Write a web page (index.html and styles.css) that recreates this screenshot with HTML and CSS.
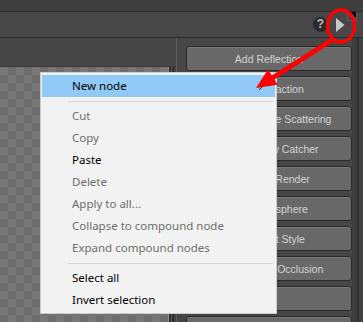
FILE: index.html
```html
<!DOCTYPE html>
<html lang="en">
<head>
    <meta charset="UTF-8">
    <title>Node Editor</title>
    <link rel="stylesheet" href="styles.css">
</head>
<body>
    <div class="topbar"></div>

    <div class="toolbar">
        <span class="help">?</span>
        <svg class="play" width="9" height="14" viewBox="0 0 9 14"><polygon points="0,0 8.5,7 0,14" fill="#c9c9c9"/></svg>
        <span class="corner"></span>
    </div>

    <div class="main">
        <div class="viewport">
            <div class="viewport-head"></div>
            <div class="viewport-body">
                <div class="checker"></div>
                <div class="scroll"></div>
            </div>
        </div>

        <div class="side">
            <button class="btn">Add Reflection</button>
            <button class="btn">Add Refraction</button>
            <button class="btn">Add Subsurface Scattering</button>
            <button class="btn">Add Shadow Catcher</button>
            <button class="btn">Add Toon Render</button>
            <button class="btn">Add Atmosphere</button>
            <button class="btn">Add Paint Style</button>
            <button class="btn">Add Ambient Occlusion</button>
            <button class="btn"></button>
            <button class="btn"></button>
        </div>
        <div class="side-edge"></div>
    </div>

    <!-- context menu -->
    <div class="menu">
        <div class="item active">New node
            <svg class="sub" width="5" height="8" viewBox="0 0 5 8"><path d="M1 1 L4 4 L1 7" fill="none" stroke="#000" stroke-width="1"/></svg>
        </div>
        <div class="sep"></div>
        <div class="item off">Cut</div>
        <div class="item off">Copy</div>
        <div class="item">Paste</div>
        <div class="item off">Delete</div>
        <div class="item off">Apply to all...</div>
        <div class="item off">Collapse to compound node</div>
        <div class="item off">Expand compound nodes</div>
        <div class="sep"></div>
        <div class="item">Select all</div>
        <div class="item">Invert selection</div>
    </div>

    <!-- red annotation -->
    <svg class="marks" width="363" height="322" viewBox="0 0 363 322">
        <ellipse cx="341" cy="26" rx="13.5" ry="16" fill="none" stroke="#ff0000" stroke-width="3.5"/>
        <line x1="332" y1="40" x2="270" y2="79.5" stroke="#ff0000" stroke-width="5"/>
        <polygon points="256,88 277.7,84.8 268,69.6" fill="#ff0000"/>
    </svg>
</body>
</html>
```

FILE: styles.css
```css
body {
    margin: 0;
    width: 363px;
    height: 322px;
    overflow: hidden;
    background-color: #464646;
    font-family: "Liberation Sans", Arial, sans-serif;
    position: relative;
}

.topbar {
    height: 11px;
    background-color: #3e3e3e;
    border-bottom: 1px solid #2f2f2f;
}

.toolbar {
    height: 25px;
    background-color: #474747;
    border-bottom: 1px solid #2c2c2c;
    display: flex;
    justify-content: flex-end;
    align-items: center;
    padding-right: 6px;
}

.help {
    width: 15px;
    height: 15px;
    border-radius: 50%;
    background-color: #2a2a2a;
    color: #bdbdbd;
    font-size: 12px;
    font-weight: bold;
    line-height: 15px;
    text-align: center;
    margin-right: 8px;
}

.play {
    margin-right: 2px;
    margin-top: 1px;
}

.corner {
    align-self: flex-start;
    width: 8px;
    height: 8px;
    border: 1px solid #5a5a5a;
    border-top: none;
    background: linear-gradient(225deg, #000 0 35%, transparent 35%);
}

.main {
    display: flex;
    height: 284px;
    overflow: hidden;
}

.viewport {
    width: 176px;
    display: flex;
    flex-direction: column;
    border-right: 1px solid #5b5b5b;
}
.viewport-head {
    height: 28px;
    border-bottom: 1px solid #3a3a3a;
}
.viewport-body {
    flex: 1;
    display: flex;
}
.checker {
    flex: 1;
    background-color: #787878;
    background-image: conic-gradient(#6d6d6d 25%, #777777 0 50%, #6d6d6d 0 75%, #777777 0);
    background-size: 16px 16px;
}
.scroll {
    width: 8px;
    background: linear-gradient(90deg, #8a8a8a 0 1px, #2e2e2e 1px 3px, #5e5e5e 3px 4px, #2e2e2e 4px 6px, #444 6px);
}

.side {
    width: 166px;
    padding: 8px 0 0 9px;
    display: flex;
    flex-direction: column;
    gap: 5px;
    overflow: hidden;
}
.btn {
    height: 25px;
    flex-shrink: 0;
    background-color: #686868;
    border: 1px solid #2a2a2a;
    border-radius: 3px;
    box-shadow: inset 0 1px 0 #777;
    color: #d4d4d4;
    font-family: "Liberation Sans", Arial, sans-serif;
    font-size: 10.5px;
    padding: 0;
}

.side-edge {
    flex: 1;
    background: linear-gradient(90deg, #3c3c3c 0 5px, #303030 5px 7px, #414141 7px);
}

.menu {
    position: absolute;
    left: 40px;
    top: 72px;
    width: 235px;
    padding: 2px 0;
    background-color: #f2f2f2;
    border: 1px solid #cccccc;
    font-family: "Noto Sans", "Segoe UI", sans-serif;
    font-size: 11.5px;
}
.item {
    height: 22px;
    line-height: 22px;
    padding-left: 30px;
    margin: 0 1px;
    color: #000;
    position: relative;
}
.item.off {
    color: #6d6d6d;
}
.item.active {
    background-color: #91c9f7;
}
.sub {
    position: absolute;
    right: 12px;
    top: 8px;
}
.sep {
    height: 1px;
    background-color: #d7d7d7;
    margin: 4px 3px 3px 27px;
}

.marks {
    position: absolute;
    left: 0;
    top: 0;
}
```
